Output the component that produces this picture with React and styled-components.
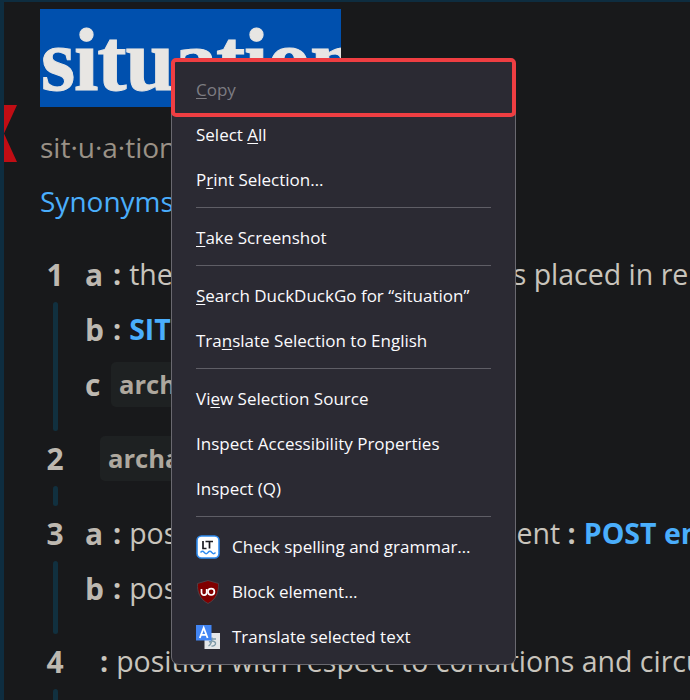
import React from "react";
import styled, { createGlobalStyle } from "styled-components";

const Global = createGlobalStyle`
  html, body { margin: 0; padding: 0; background: #18191b; overflow: hidden; }
  #root { width: 690px; height: 700px; overflow: hidden; }
  * { box-sizing: border-box; }
`;

const Page = styled.div`
  position: relative;
  width: 690px;
  height: 700px;
  overflow: hidden;
  background: #18191b;
  border-left: 4px solid #0e2d40;
  border-top: 2px solid #0e2d40;
  font-family: "Open Sans", "Noto Sans", sans-serif;
  color: #c8c4bc;
  white-space: nowrap;
`;

const Main = styled.main`
  padding: 7px 0 0 36px;
`;

const Title = styled.h1`
  margin: 0;
  width: 301px;
  height: 98px;
  background: #0050ae;
  color: #e8e6e3;
  font-family: "Liberation Serif", serif;
  font-weight: 700;
  font-size: 88px;
  line-height: 104px;
  letter-spacing: -1.2px;
  padding-left: 1px;
  -webkit-text-stroke: 1px #e8e6e3;
  overflow: hidden;
`;

const Ribbon = styled.svg`
  position: absolute;
  left: -4px;
  top: 103px;
`;

const Pron = styled.div`
  margin-top: 22px;
  font-size: 28px;
  line-height: 36px;
  color: #9a9186;
`;

const Syn = styled.div`
  margin-top: 18px;
  font-size: 28px;
  line-height: 37px;
  color: #4aaefc;
`;

const Senses = styled.div`
  margin-top: 36px;
  display: flex;
  flex-direction: column;
`;

const Sense = styled.section`
  display: grid;
  grid-template-columns: 30px 1fr;
  column-gap: 15px;
  min-height: ${(p) => p.$h}px;
`;

const NumCol = styled.div`
  display: flex;
  flex-direction: column;
  align-items: center;
`;

const Num = styled.div`
  font-weight: 700;
  font-size: 30px;
  line-height: 37px;
  color: #bdb8b0;
  height: 37px;
`;

const Rail = styled.div`
  width: 5px;
  margin-top: 9px;
  height: ${(p) => p.$h}px;
  border-radius: 3px;
  background: #11303f;
`;

const Lines = styled.div`
  display: flex;
  flex-direction: column;
  gap: 18px;
`;

const Line = styled.div`
  display: flex;
  align-items: center;
  height: 37px;
  font-size: 28.5px;
  line-height: 37px;
  padding-left: ${(p) => p.$pad ?? 0}px;
`;

const Letter = styled.b`
  font-weight: 700;
  font-size: 30px;
  color: #bdb8b0;
  width: 28px;
`;

const Colon = styled.b`
  font-weight: 700;
  color: #c8c4bc;
  margin-right: 8px;
`;

const Link = styled.b`
  font-weight: 700;
  color: #4aaefc;
`;

const Tag = styled.span`
  display: inline-block;
  padding: 0 8px;
  height: 45px;
  line-height: 45px;
  margin-left: ${(p) => p.$ml ?? 0}px;
  border-radius: 5px;
  background: #1e2122;
  color: #aea89e;
  font-weight: 700;
  font-size: 25.6px;
`;

const Menu = styled.nav`
  position: absolute;
  left: 167px;
  top: 56px;
  width: 345px;
  height: 607px;
  padding: 8px 0;
  border: 1px solid #6a6970;
  border-radius: 8px;
  background: #2b2a33;
  font-family: "Open Sans", "Noto Sans", sans-serif;
  font-size: 17px;
  color: #fbfbfe;
`;

const Item = styled.div`
  position: relative;
  display: flex;
  align-items: center;
  gap: 12px;
  height: 45px;
  padding-left: 24px;
  color: ${(p) => (p.$off ? "#7d7c82" : "#fbfbfe")};
  & u { text-underline-offset: 2px; text-decoration-thickness: 1px; }
`;

const Highlight = styled.div`
  position: absolute;
  left: -1px;
  right: -1px;
  top: -1px;
  height: 59px;
  border: 4px solid #ef3e42;
  border-radius: 5px;
`;

const Sep = styled.hr`
  margin: 5px 24px 7px;
  border: 0;
  height: 1px;
  background: #5f5e66;
`;

const Icon = styled.svg`
  flex: none;
  display: block;
`;

const LtIcon = () => (
  <Icon width="24" height="24" viewBox="0 0 24 24">
    <rect x="1" y="1" width="22" height="22" rx="4.500" fill="#fff" stroke="#2f8cf0" strokeWidth="1.600" />
    <path d="M7 6v7.500h3.500M9.500 6.500h7.500M13.500 6.500v7" fill="none" stroke="#1c1c22" strokeWidth="1.700" />
    <path d="M4.500 17.500c1.500-1.600 2.500-1.600 3.800 0s2.400 1.600 3.700 0 2.500-1.600 3.800 0 2.400 1.600 3.700 0" fill="none" stroke="#2f8cf0" strokeWidth="1.400" />
  </Icon>
);

const UboIcon = () => (
  <Icon width="24" height="24" viewBox="0 0 24 24">
    <path d="M12 .5 22.500 3.500C23 12 20 19.500 12 23.500 4 19.500 1 12 1.500 3.500Z" fill="#800000" stroke="#4a4a50" strokeWidth=".8" />
    <path d="M5.500 9v3.500a2.600 2.600 0 0 0 5.200 0V9" fill="none" stroke="#fff" strokeWidth="1.700" />
    <circle cx="15.200" cy="11.800" r="3.200" fill="none" stroke="#fff" strokeWidth="1.700" />
  </Icon>
);

const GtIcon = () => (
  <Icon width="24" height="24" viewBox="0 0 24 24">
    <rect x="8.500" y="8" width="15.500" height="16" fill="#e4e6e8" />
    <path d="M12 14h8M16 12.500c0 4-1 7-3.500 8.500M13 17c3-1.500 6-1 6.500 1s-2 3.500-4 3" fill="none" stroke="#7e9aa8" strokeWidth="1.400" />
    <rect x="0" y="0" width="15.500" height="15.500" fill="#4285f4" />
    <path d="M3.800 13 7.700 2.800 11.600 13M5.200 9.800h5" fill="none" stroke="#fff" strokeWidth="1.800" />
  </Icon>
);

export default function App() {
  return (
    <>
      <Global />
      <Page>
        <Ribbon width="17" height="57" viewBox="0 0 17 57">
          <path d="M0 0H17L4 28.500 17 57H0Z" fill="#c00d14" />
        </Ribbon>
        <Main>
          <Title>situation</Title>
          <Pron>sit·u·a·tion</Pron>
          <Syn>Synonyms</Syn>
          <Senses>
            <Sense $h={184}>
              <NumCol>
                <Num>1</Num>
                <Rail $h={129} />
              </NumCol>
              <Lines>
                <Line>
                  <Letter>a</Letter>
                  <Colon>:</Colon>the way in which something is placed in relation
                </Line>
                <Line>
                  <Letter>b</Letter>
                  <Colon>:</Colon>
                  <Link>SITE</Link>
                </Line>
                <Line>
                  <Letter>c</Letter>
                  <Tag $ml={-2}>archaic</Tag>
                </Line>
              </Lines>
            </Sense>
            <Sense $h={75}>
              <NumCol>
                <Num>2</Num>
                <Rail $h={20} />
              </NumCol>
              <Lines>
                <Line $pad={15}>
                  <Tag>archaic</Tag>
                </Line>
              </Lines>
            </Sense>
            <Sense $h={128}>
              <NumCol>
                <Num>3</Num>
                <Rail $h={73} />
              </NumCol>
              <Lines>
                <Line>
                  <Letter>a</Letter>
                  <Colon>:</Colon>position or place of employment&nbsp;<Colon>:</Colon>
                  <Link>POST employment</Link>
                </Line>
                <Line>
                  <Letter>b</Letter>
                  <Colon>:</Colon>position
                </Line>
              </Lines>
            </Sense>
            <Sense $h={60}>
              <NumCol>
                <Num>4</Num>
                <Rail $h={20} />
              </NumCol>
              <Lines>
                <Line $pad={15}>
                  <Colon>:</Colon>position with respect to conditions and circumstances
                </Line>
              </Lines>
            </Sense>
          </Senses>
        </Main>

        <Menu>
          <Item $off><span><u>C</u>opy</span></Item>
          <Item><span>Select <u>A</u>ll</span></Item>
          <Item><span>P<u>r</u>int Selection…</span></Item>
          <Sep />
          <Item><span><u>T</u>ake Screenshot</span></Item>
          <Sep />
          <Item><span><u>S</u>earch DuckDuckGo for “situation”</span></Item>
          <Item><span>Tra<u>n</u>slate Selection to English</span></Item>
          <Sep />
          <Item><span>Vi<u>e</u>w Selection Source</span></Item>
          <Item>Inspect Accessibility Properties</Item>
          <Item>Inspect (Q)</Item>
          <Sep />
          <Item><LtIcon />Check spelling and grammar…</Item>
          <Item><UboIcon />Block element…</Item>
          <Item><GtIcon />Translate selected text</Item>
          <Highlight />
        </Menu>
      </Page>
    </>
  );
}
